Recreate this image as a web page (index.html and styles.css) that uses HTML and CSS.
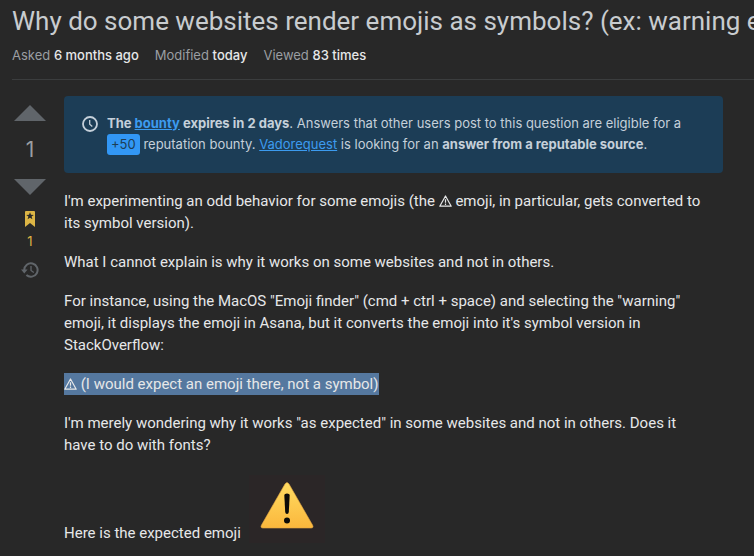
FILE: index.html
```html
<!DOCTYPE html>
<html lang="en">
<head>
    <meta charset="UTF-8">
    <meta name="viewport" content="width=device-width, initial-scale=1.0">
    <title>Why do some websites render emojis as symbols?</title>
    <link rel="stylesheet" href="styles.css">
</head>
<body>
    <div class="header">
        <h1>Why do some websites render emojis as symbols? (ex: warning emoji)</h1>
        <div class="info">
            <div><span>Asked</span> <time>6 months ago</time></div>
            <div><span>Modified</span> <time>today</time></div>
            <div><span>Viewed</span> <b>83 times</b></div>
        </div>
    </div>
    <div class="question">
        <div class="votes">
            <button class="vote" aria-label="Up vote">
                <svg width="32" height="16" viewBox="0 0 32 16"><path d="M0 16h32L16 0z" fill="currentColor"/></svg>
            </button>
            <div class="score">1</div>
            <button class="vote" aria-label="Down vote">
                <svg width="32" height="16" viewBox="0 0 32 16"><path d="M0 0h32L16 16z" fill="currentColor"/></svg>
            </button>
            <button class="bookmark" aria-label="Bookmark">
                <svg width="10" height="16" viewBox="0 0 10 16">
                    <path d="M1 0h8a1 1 0 0 1 1 1v15l-5-4-5 4V1a1 1 0 0 1 1-1z" fill="#dcb545"/>
                    <path d="M5 1.200l1 2.600 2.800.1-2.200 1.700.8 2.700L5 6.800 2.600 8.300l.8-2.700-2.200-1.700L4 3.800z" fill="#282828"/>
                </svg>
                <span>1</span>
            </button>
            <a class="history" href="#" aria-label="Timeline">
                <svg width="18" height="18" viewBox="0 0 18 18" fill="none" stroke="currentColor">
                    <path d="M3.200 9a6.700 6.700 0 1 1 2.200 5" stroke-width="2"/>
                    <path d="M0 8.500h6.600L3.300 12.500z" fill="currentColor" stroke="none"/>
                    <path d="M10 5v4.500l2.800 2" stroke-width="1.300"/>
                </svg>
            </a>
        </div>
        <div class="content">
            <div class="notice">
                <svg width="16" height="16" viewBox="0 0 16 16" fill="none" stroke="currentColor">
                    <circle cx="8" cy="8" r="7" stroke-width="1.800"/>
                    <path d="M7.700 4v4.200l2.600 2.300" stroke-width="1.300"/>
                </svg>
                <p><b>The <a href="#">bounty</a> expires in 2 days</b>. Answers that other users post to this question are eligible for a <span class="badge">+50</span> reputation bounty. <a href="#">Vadorequest</a> is looking for an <b>answer from a reputable source</b>.</p>
            </div>
            <div class="post">
                <p>I'm experimenting an odd behavior for some emojis (the <svg class="symbol" role="img" aria-label="warning" viewBox="0 0 13 12"><path d="M6.500 1L12.200 11.200H.8z"/><path d="M6.500 4.200v3.500M6.500 8.600v1.300"/></svg> emoji, in particular, gets converted to its symbol version).</p>
                <p>What I cannot explain is why it works on some websites and not in others.</p>
                <p>For instance, using the MacOS "Emoji finder" (cmd + ctrl + space) and selecting the "warning" emoji, it displays the emoji in Asana, but it converts the emoji into it's symbol version in StackOverflow:</p>
                <p><span class="selected"><svg class="symbol" role="img" aria-label="warning" viewBox="0 0 13 12"><path d="M6.500 1L12.200 11.200H.8z"/><path d="M6.500 4.200v3.500M6.500 8.600v1.300"/></svg> (I would expect an emoji there, not a symbol)</span></p>
                <p>I'm merely wondering why it works "as expected" in some websites and not in others. Does it have to do with fonts?</p>
                <p>Here is the expected emoji <svg class="emoji" role="img" aria-label="warning emoji" width="76" height="68" viewBox="0 0 76 68">
                    <defs>
                        <linearGradient id="yellow" x1="0" y1="0" x2="0" y2="1">
                            <stop offset="0" stop-color="#ffdc62"/>
                            <stop offset="1" stop-color="#fbb73c"/>
                        </linearGradient>
                    </defs>
                    <rect width="76" height="68" fill="#2b2627"/>
                    <path d="M36 9q2-3 4 0l23.500 41q1.500 3-1.500 3H14q-3 0-1.500-3z" fill="url(#yellow)" stroke="#e5a844" stroke-width=".6"/>
                    <path d="M35.300 20q0-1.500 2.700-1.500t2.700 1.500L39.800 37q-.2 2-1.800 2t-1.800-2z" fill="#0c0b08"/>
                    <circle cx="38" cy="45.500" r="3" fill="#0c0b08"/>
                </svg></p>
            </div>
        </div>
    </div>
</body>
</html>
```
FILE: styles.css
```css
body {
    margin: 0;
    padding: 4px 0 0 12px;
    background-color: #282828;
    color: #e6e7e8;
    font-family: Roboto, "Liberation Sans", sans-serif;
    font-size: 15px;
    line-height: 22px;
}
h1 {
    margin: 0 0 8px;
    overflow: hidden;
    color: #c8cccf;
    font-size: 26px;
    font-weight: 400;
    line-height: 35px;
    white-space: nowrap;
}
.header {
    border-bottom: 1px solid #3b3d3e;
    padding-bottom: 15px;
}
.info {
    display: flex;
    gap: 16px;
    font-family: Inter, sans-serif;
    font-size: 13px;
    line-height: 17px;
}
.info span {
    color: #9a9ea2;
}
.info time,
.info b {
    font-weight: 500;
}
.question {
    display: flex;
    gap: 16px;
    padding-top: 16px;
}
.votes {
    display: flex;
    flex-direction: column;
    align-items: center;
    width: 36px;
    padding-top: 9px;
}
button {
    background: none;
    border: none;
    padding: 0;
    font-family: inherit;
}
.vote {
    display: flex;
    color: #60656a;
}
.score {
    color: #9a9ea2;
    font-family: Inter, sans-serif;
    font-size: 21px;
    line-height: 58px;
}
.bookmark {
    display: flex;
    flex-direction: column;
    align-items: center;
    gap: 6px;
    margin-top: 16px;
    color: #dcb545;
    font-family: Inter, sans-serif;
    font-size: 13px;
    line-height: 16px;
}
.history {
    display: flex;
    margin-top: 12px;
    color: #60656a;
}
.content {
    flex: 1;
    padding-right: 31px;
}
.notice {
    display: flex;
    align-items: flex-start;
    gap: 9px;
    margin-bottom: 17px;
    padding: 17px 32px 18px 18px;
    border-radius: 4px;
    background-color: #1c3d56;
    color: #c5d0da;
    font-family: Inter, sans-serif;
    font-size: 13px;
    line-height: 21px;
}
.notice svg {
    flex: none;
    margin-top: 3px;
}
.notice .badge {
    display: inline-block;
    padding: 0 4px;
    border-radius: 3px;
    background-color: #3297f5;
    color: #1c3d56;
    line-height: 21px;
}
.notice p {
    margin: 0;
}
.notice a {
    color: #3c9bef;
}
.post {
    padding-right: 14px;
}
.post p {
    margin: 0 0 17px;
}
.symbol {
    width: 13px;
    height: 12px;
    fill: none;
    stroke: currentColor;
    stroke-width: 1.2;
    stroke-linejoin: round;
    vertical-align: -1px;
}
.selected {
    display: inline-block;
    background-color: #55789f;
}
.emoji {
    margin: 2px 0 0 4px;
    vertical-align: -5px;
}
```
